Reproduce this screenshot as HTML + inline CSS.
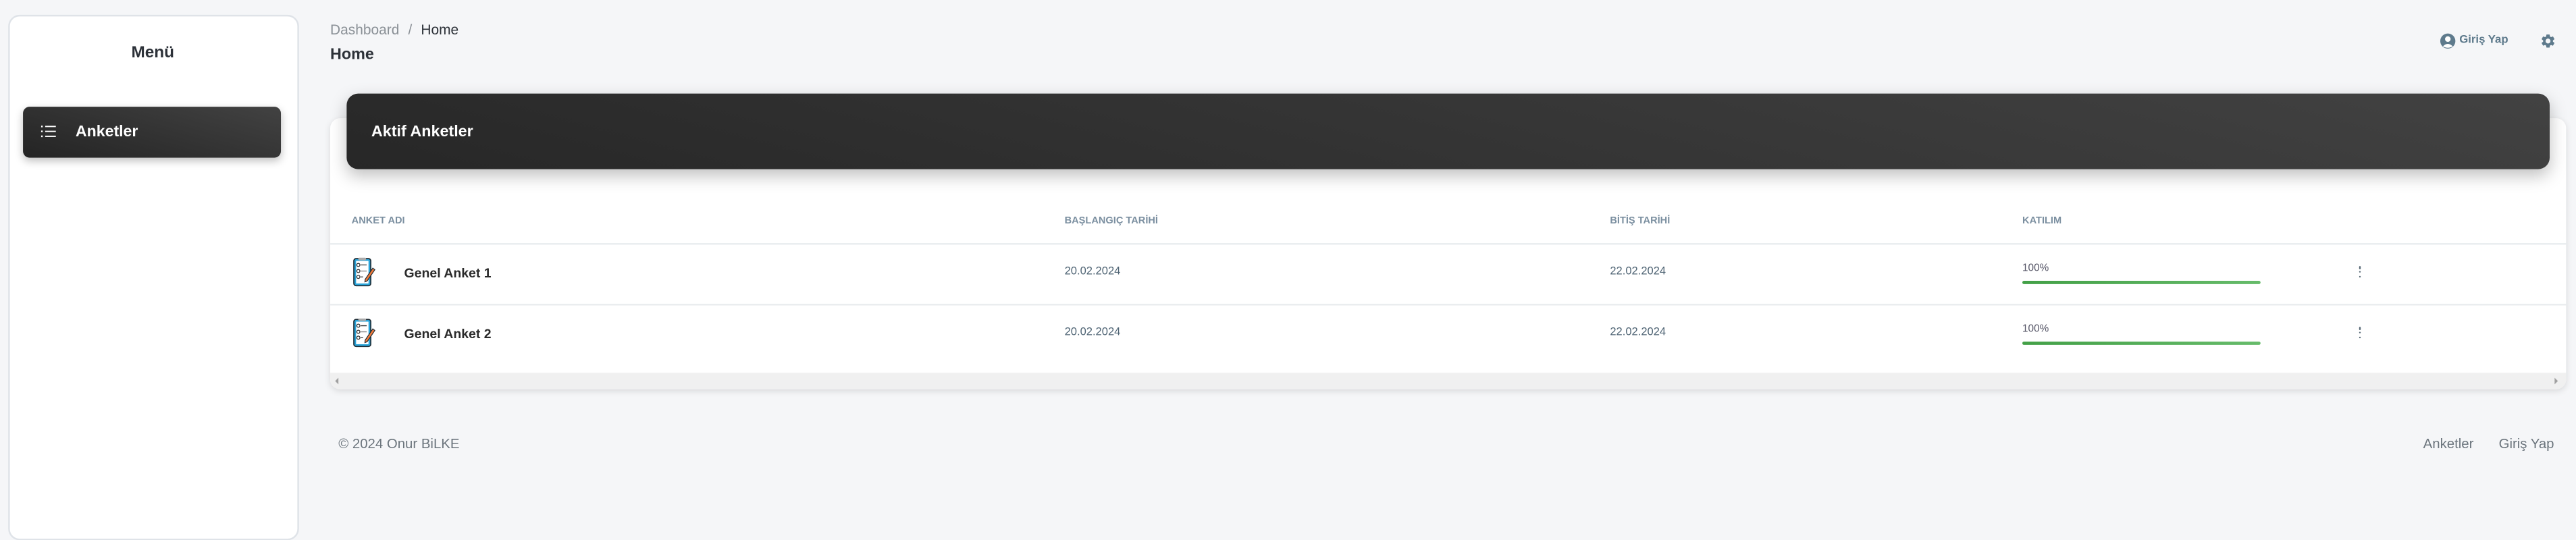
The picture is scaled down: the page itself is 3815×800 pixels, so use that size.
<!DOCTYPE html>
<html><head><meta charset="utf-8"><style>
*{margin:0;padding:0;box-sizing:border-box}
html,body{width:3815px;height:750px;overflow:hidden;background:#f5f6f8}
#w{position:absolute;left:0;top:0;width:1568px;height:309px;transform:scale(2.433);transform-origin:0 0;font-family:"Liberation Sans",sans-serif;}
.a{position:absolute;white-space:nowrap}
.sb{left:4.5px;top:9px;width:177px;height:320px;background:#fff;border:0.5px solid #dfe3e8;border-radius:7px}
.btn{left:14px;top:64.5px;width:157px;height:31px;border-radius:4px;background:linear-gradient(195deg,#424242,#242424);box-shadow:0 2px 5px rgba(0,0,0,.25)}
.card{left:201px;top:72px;width:1361px;height:165px;background:#fff;border-radius:6px;box-shadow:0 1px 4px rgba(0,0,0,.12)}
.hdr{left:211px;top:57px;width:1341px;height:46px;border-radius:7px;background:linear-gradient(195deg,#424242,#272727);box-shadow:0 4px 10px rgba(0,0,0,.25)}
.th{font-size:6px;font-weight:bold;color:#7b8fa0;top:132px}
.dt{font-size:6.8px;color:#4f6474}
.nm{font-size:8px;font-weight:bold;color:#2a2a2a}
.line{left:201px;width:1361px;height:0.6px;background:#e9ecef}
.bar{left:1231px;width:145px;height:2.7px;border-radius:2px;background:linear-gradient(90deg,#43a047,#66bb6a)}
.pc{font-size:6.3px;color:#556}
.dots{width:1.6px}
.dots i{display:block;width:1.5px;height:1.5px;border-radius:50%;background:#5a6b78;margin-bottom:1.3px}
</style></head><body><div id="w">
<div class="a sb"></div>
<div class="a" style="left:4.5px;width:177px;top:26.5px;text-align:center;font-size:10px;font-weight:bold;color:#2c3138">Menü</div>
<div class="a btn"></div>
<svg class="a" style="left:25px;top:76px" width="10" height="8" viewBox="0 0 10 8"><g fill="#fff"><rect x="0" y="0.5" width="1" height="1"/><rect x="0" y="3.5" width="1" height="1"/><rect x="0" y="6.5" width="1" height="1"/><rect x="2.5" y="0.6" width="6.5" height="0.8"/><rect x="2.5" y="3.6" width="6.5" height="0.8"/><rect x="2.5" y="6.6" width="6.5" height="0.8"/></g></svg>
<div class="a" style="left:46px;top:74.5px;font-size:9.5px;font-weight:bold;color:#fff">Anketler</div>

<div class="a" style="left:201px;top:13px;font-size:8.6px;color:#8a9096">Dashboard <span style="margin:0 3px">/</span> <span style="color:#2c3138">Home</span></div>
<div class="a" style="left:201px;top:27.5px;font-size:9.6px;font-weight:bold;color:#2c3138">Home</div>

<svg class="a" style="left:1485px;top:20px" width="10" height="10" viewBox="0 0 10 10"><circle cx="5" cy="5" r="4.6" fill="#5e7a8c"/><circle cx="5" cy="3.8" r="1.7" fill="#fff"/><path d="M2 8.2 Q5 5.2 8 8.2 Q5 10 2 8.2Z" fill="#fff"/></svg>
<div class="a" style="left:1497px;top:21px;font-size:6.9px;font-weight:bold;color:#5e7a8c">Giriş Yap</div>
<svg class="a" style="left:1545.5px;top:20px" width="10" height="10" viewBox="0 0 24 24"><path fill="#5e7a8c" d="M19.14 12.94c.04-.3.06-.61.06-.94s-.02-.64-.07-.94l2.03-1.58a.49.49 0 0 0 .12-.61l-1.92-3.32a.49.49 0 0 0-.59-.22l-2.39.96c-.5-.38-1.030-.7-1.62-.94l-.36-2.54a.48.48 0 0 0-.48-.41h-3.84c-.24 0-.43.17-.47.41l-.36 2.54c-.59.24-1.13.57-1.62.94l-2.390-.96c-.22-.08-.47 0-.59.22L2.74 8.87c-.12.21-.08.47.12.61l2.03 1.58c-.05.3-.09.63-.09.94s.02.64.07.94l-2.03 1.58a.49.49 0 0 0-.12.61l1.92 3.32c.12.22.37.29.59.22l2.39-.96c.5.38 1.03.7 1.62.94l.36 2.54c.05.24.24.41.48.41h3.84c.24 0 .44-.17.47-.41l.36-2.54c.59-.24 1.13-.56 1.62-.94l2.39.96c.22.08.47 0 .59-.22l1.92-3.32c.12-.22.07-.47-.12-.61l-2.01-1.58zM12 15.6A3.6 3.6 0 1 1 12 8.4a3.6 3.6 0 0 1 0 7.2z"/></svg>

<div class="a card"></div>
<div class="a" style="left:201px;top:226.5px;width:1361px;height:10.5px;background:#f0f0f0;border-radius:0 0 6px 6px"></div>
<div class="a" style="left:204px;top:229.5px;width:0;height:0;border-top:2px solid transparent;border-bottom:2px solid transparent;border-right:2px solid #a0a0a0"></div>
<div class="a" style="left:1555px;top:229.5px;width:0;height:0;border-top:2px solid transparent;border-bottom:2px solid transparent;border-left:2px solid #a0a0a0"></div>
<div class="a hdr"></div>
<div class="a" style="left:226px;top:75px;font-size:9.6px;font-weight:bold;color:#fff">Aktif Anketler</div>

<div class="a th" style="left:214px">ANKET ADI</div>
<div class="a th" style="left:648px">BAŞLANGIÇ TARİHİ</div>
<div class="a th" style="left:980px">BİTİŞ TARİHİ</div>
<div class="a th" style="left:1231px">KATILIM</div>
<div class="a line" style="top:147.5px"></div>
<div class="a line" style="top:184.5px"></div>

<svg class="a" style="left:214px;top:156px" width="22" height="20" viewBox="0 0 16 14"><rect x="1" y="0.8" width="7.5" height="12" rx="1" fill="#29a3d8" stroke="#1c2a33" stroke-width="0.5"/><rect x="2" y="1.8" width="5.5" height="10" fill="#fff"/><rect x="3" y="0.4" width="3.4" height="1.1" rx="0.4" fill="#aaa"/><g fill="none" stroke="#333" stroke-width="0.4"><circle cx="3" cy="3.6" r="0.7"/><circle cx="3" cy="6.3" r="0.7"/><circle cx="3" cy="8.9" r="0.7"/><path d="M4.1 3.6h2.6M4.1 8.9h1"/></g><path d="M4.1 6.3h2.6" stroke="#888" stroke-width="0.4"/><path d="M6 10l3.4-5 .9.7-3.4 5-1 .4z" fill="#f07a3a" stroke="#1c2a33" stroke-width="0.35"/></svg>
<div class="a nm" style="left:246px;top:161.5px">Genel Anket 1</div>
<div class="a dt" style="left:648px;top:162px">20.02.2024</div>
<div class="a dt" style="left:980px;top:162px">22.02.2024</div>
<div class="a pc" style="left:1231px;top:159.5px">100%</div>
<div class="a bar" style="top:170.5px"></div>
<div class="a dots" style="left:1435.5px;top:162px"><i></i><i></i><i></i></div>

<svg class="a" style="left:214px;top:193px" width="22" height="20" viewBox="0 0 16 14"><rect x="1" y="0.8" width="7.5" height="12" rx="1" fill="#29a3d8" stroke="#1c2a33" stroke-width="0.5"/><rect x="2" y="1.8" width="5.5" height="10" fill="#fff"/><rect x="3" y="0.4" width="3.4" height="1.1" rx="0.4" fill="#aaa"/><g fill="none" stroke="#333" stroke-width="0.4"><circle cx="3" cy="3.6" r="0.7"/><circle cx="3" cy="6.3" r="0.7"/><circle cx="3" cy="8.9" r="0.7"/><path d="M4.1 3.6h2.6M4.1 8.9h1"/></g><path d="M4.1 6.3h2.6" stroke="#888" stroke-width="0.4"/><path d="M6 10l3.4-5 .9.7-3.4 5-1 .4z" fill="#f07a3a" stroke="#1c2a33" stroke-width="0.35"/></svg>
<div class="a nm" style="left:246px;top:198.5px">Genel Anket 2</div>
<div class="a dt" style="left:648px;top:199px">20.02.2024</div>
<div class="a dt" style="left:980px;top:199px">22.02.2024</div>
<div class="a pc" style="left:1231px;top:196.5px">100%</div>
<div class="a bar" style="top:207.7px"></div>
<div class="a dots" style="left:1435.5px;top:199px"><i></i><i></i><i></i></div>

<div class="a" style="left:206px;top:265px;font-size:8.4px;color:#6c757d">© 2024 Onur BiLKE</div>
<div class="a" style="left:1475px;top:265px;font-size:8.4px;color:#6c757d">Anketler</div>
<div class="a" style="left:1521px;top:265px;font-size:8.4px;color:#6c757d">Giriş Yap</div>
</div></body></html>
